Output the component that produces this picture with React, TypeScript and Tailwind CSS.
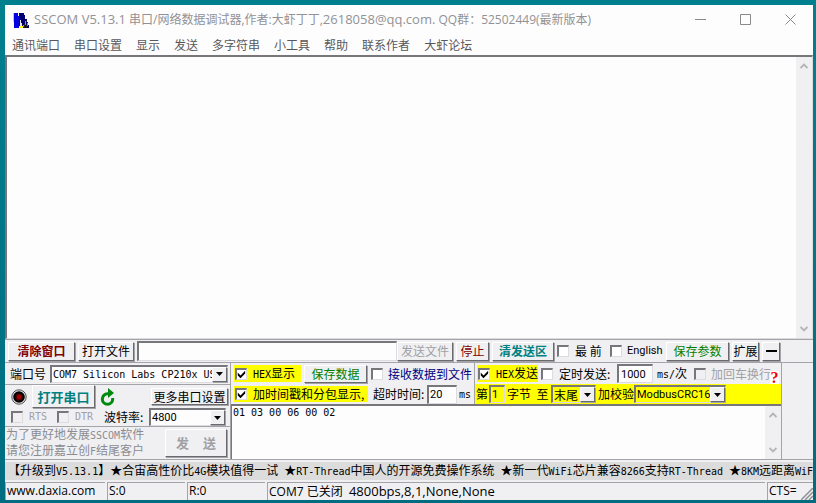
import { ReactNode } from 'react';

const MENUS = ['通讯端口', '串口设置', '显示', '发送', '多字符串', '小工具', '帮助', '联系作者', '大虾论坛'];

const RAISED = 'border border-t-white border-l-white border-r-[#6a6a6e] border-b-[#6a6a6e] shadow-[1px_1px_0_#a4a4a8]';
const SUNKEN = 'border-t-2 border-l-2 border-r border-b border-t-[#77777b] border-l-[#77777b] border-r-[#dcdce0] border-b-[#dcdce0]';

const Mono = ({ children }: { children: ReactNode }) => (
    <span className="font-['DejaVu_Sans_Mono',monospace] text-[10px]">{ children }</span>
);

const Button = ({ children, className = '' }: { children: ReactNode; className?: string }) => (
    <button type="button" className={`flex shrink-0 items-center justify-center whitespace-nowrap bg-[#f0f0f3] ${RAISED} ${className}`}>
        { children }
    </button>
);

const Check = ({ children, checked = false, disabled = false, className = '' }: { children: ReactNode; checked?: boolean; disabled?: boolean; className?: string }) => (
    <label className={`flex shrink-0 items-center whitespace-nowrap ${className}`}>
        <span className="relative flex h-3 w-3 shrink-0">
            <input
                type="checkbox"
                defaultChecked={ checked }
                disabled={ disabled }
                className={`peer h-3 w-3 appearance-none ${SUNKEN} ${disabled ? 'bg-[#f0f0f3]' : 'bg-white'}`}
            />
            <svg viewBox="0 0 13 13" className="pointer-events-none absolute inset-0 hidden h-3 w-3 peer-checked:block">
                <path d="M3 5v3l3 3 5-5V3L6 8z" fill="#000" />
            </svg>
        </span>
        { children }
    </label>
);

const Select = ({ label, value, className = '', text = '' }: { label: string; value: string; className?: string; text?: string }) => (
    <span className={`relative flex ${SUNKEN} ${className}`}>
        <select aria-label={ label } className={`h-full w-full min-w-0 appearance-none bg-transparent pl-px pr-[15px] ${text}`}>
            <option>{ value }</option>
        </select>
        <span className={`pointer-events-none absolute top-0 right-0 bottom-0 flex w-[15px] items-center justify-center bg-[#f0f0f3] ${RAISED}`}>
            <svg viewBox="0 0 7 4" className="h-1 w-[7px]"><path d="M0 0h7L3.5 4z" fill="#000" /></svg>
        </span>
    </span>
);

const ScrollBar = () => (
    <div className="flex w-4 shrink-0 flex-col items-center justify-between bg-[#f0f0f3] py-[6px]">
        <svg viewBox="0 0 8 6" className="h-[6px] w-2"><path d="M0.5 5L4 1.5 7.5 5" fill="none" stroke="#b4b4b8" strokeWidth="1.8" /></svg>
        <svg viewBox="0 0 8 6" className="h-[6px] w-2"><path d="M0.5 1L4 4.5 7.5 1" fill="none" stroke="#b4b4b8" strokeWidth="1.8" /></svg>
    </div>
);

const TitleBar = () => (
    <header className="flex h-[29px] shrink-0 items-center bg-[#fdfdfd] pl-2 text-[#929296]">
        <svg viewBox="0 0 16 16" className="mr-[5px] h-4 w-4" shapeRendering="crispEdges">
            <path d="M0 1h1v9H0z" fill="#c8c8c8" />
            <path d="M1 1h5v15H1z" fill="#0000e0" />
            <path d="M5 1h1v3H5z" fill="#fff" />
            <path d="M6 1h5v2h1v4h2v3h1v3h1v3H6z" fill="#000070" />
            <path d="M7 8h1v3h1v3H7z" fill="#e8e8e8" />
            <path d="M12 9h1v4h-1zM10 13h1v2h-1zM14 11h1v3h-1z" fill="#909090" />
            <path d="M13 8h1v2h-1zM11 12h1v4h-1zM13 13h1v3h-1z" fill="#202020" />
            <path d="M6 14h4v2H6z" fill="#ffff00" />
        </svg>
        <h1 className="truncate font-['Open_Sans','Noto_Sans_CJK_SC',sans-serif] text-xs">
            <span className="text-[13px]">SSCOM V5.13.1</span> 串口/网络数据调试器,作者:大虾丁丁,<span className="text-[13px]">2618058@qq.com.</span> QQ群：52502449(最新版本)
        </h1>
        <div className="ml-auto flex">
            <button type="button" aria-label="Minimize" className="flex w-[45px] items-center justify-center">
                <svg viewBox="0 0 11 11" className="h-[11px] w-[11px]"><path d="M0 5.5h11" stroke="#8a8a8a" /></svg>
            </button>
            <button type="button" aria-label="Maximize" className="flex w-[45px] items-center justify-center">
                <svg viewBox="0 0 11 11" className="h-[11px] w-[11px]"><path d="M.5.5h10v10H.5z" fill="none" stroke="#8a8a8a" /></svg>
            </button>
            <button type="button" aria-label="Close" className="flex w-[45px] items-center justify-center">
                <svg viewBox="0 0 11 11" className="h-[11px] w-[11px]"><path d="M.5.5l10 10M10.5.5l-10 10" stroke="#8a8a8a" /></svg>
            </button>
        </div>
    </header>
);

const SendBar = () => (
    <div className="flex h-6 shrink-0 items-center border-t border-b border-[#a4a4a8] pl-[3px]">
        <Button className="h-[19px] w-[67px] font-bold text-[#800000]">清除窗口</Button>
        <Button className="ml-[3px] h-[19px] w-14">打开文件</Button>
        <input type="text" aria-label="文件" className={`ml-[3px] h-5 min-w-0 flex-1 bg-[#fdfdfd] px-1 ${SUNKEN}`} />
        <Button className="h-[19px] w-14 text-[#a0a0a4]">发送文件</Button>
        <Button className="ml-[3px] h-[19px] w-[33px] text-[#800000]">停止</Button>
        <Button className="ml-[3px] h-[19px] w-[62px] font-bold text-[#008080]">清发送区</Button>
        <Check className="ml-[3px] w-[53px] gap-[6px]">最 前</Check>
        <Check className="w-[56px] gap-[5px]"><span className="font-['Roboto',sans-serif] text-[11px]">English</span></Check>
        <Button className="h-[19px] w-[63px] text-[#008000]">保存参数</Button>
        <Button className="ml-[3px] h-[19px] w-[27px]">扩展</Button>
        <Button className="ml-[3px] mr-[33px] h-[19px] w-[18px]">
            <svg viewBox="0 0 11 2" className="h-[2px] w-[11px]"><path d="M0 0h11v2H0z" fill="#000" /></svg>
        </Button>
    </div>
);

const PortPanel = () => (
    <section className="flex w-[225px] shrink-0 flex-col">
        <div className="flex h-[21px] items-center pl-[5px]">
            <span className="w-10 shrink-0">端口号</span>
            <Select label="端口号" value="COM7 Silicon Labs CP210x USB" className="h-[18px] w-[178px] bg-[#fdfdfd]" text="font-['DejaVu_Sans_Mono',monospace] text-[10px]" />
        </div>
        <div className="flex h-[43px] flex-col border-t border-b border-[#a4a4a8]">
            <div className="flex h-[23px] items-center pl-[6px]">
                <svg viewBox="0 0 16 16" className="h-4 w-4">
                    <circle cx="8" cy="8" r="7.2" fill="#e4e4e4" stroke="#505050" strokeWidth="1" />
                    <circle cx="8" cy="8" r="5.8" fill="#000" />
                    <circle cx="8" cy="8" r="3.6" fill="#500000" />
                    <circle cx="8" cy="8" r="2.2" fill="#a80000" />
                </svg>
                <Button className="ml-[5px] h-[23px] w-[63px] text-[13px] font-bold text-[#008080]">打开串口</Button>
                <button type="button" aria-label="刷新" className="ml-[5px]">
                    <svg viewBox="0 0 16 18" className="h-[18px] w-4">
                        <path d="M8.5 5.8H7.5A5.2 5.2 0 1 0 12.7 11V10" fill="none" stroke="#008a10" strokeWidth="3" />
                        <path d="M8 0l6 5-6 5z" fill="#008a10" />
                    </svg>
                </button>
                <Button className="ml-auto mr-[2px] h-[17px] w-[77px]">更多串口设置</Button>
            </div>
            <div className="flex h-[19px] items-center pl-[6px] text-[#a0a0a4]">
                <Check disabled className="w-[46px] gap-[6px]"><Mono>RTS</Mono></Check>
                <Check disabled className="w-[47px] gap-[6px]"><Mono>DTR</Mono></Check>
                <span className="w-[45px] shrink-0 text-black">波特率:</span>
                <Select label="波特率" value="4800" className="h-[18px] w-[77px] bg-[#fdfdfd] text-black" text="font-['Roboto',sans-serif] text-[11px]" />
            </div>
        </div>
        <div className="flex flex-1 items-center pl-px text-[#8c8c90]">
            <p className="w-[159px] leading-[14px]">
                为了更好地发展<Mono>SSCOM</Mono>软件<br />
                请您注册嘉立创<Mono>F</Mono>结尾客户
            </p>
            <Button className="h-7 w-[62px] gap-[14px] text-[13px] font-bold text-[#a0a0a4]"><span>发</span><span>送</span></Button>
        </div>
    </section>
);

const SendPanel = () => (
    <section className="flex min-w-0 flex-1 flex-col border-l border-[#a4a4a8]">
        <div className="flex h-[41px]">
            <div className="flex w-[243px] shrink-0 flex-col">
                <div className="flex h-[21px] items-center pl-[3px]">
                    <Check checked className="h-[17px] w-[67px] gap-[6px] bg-[#ffff00] pl-px"><span><Mono>HEX</Mono>显示</span></Check>
                    <Button className="ml-[3px] h-[18px] w-[63px] text-[#008000]">保存数据</Button>
                    <Check className="ml-1 gap-[5px] text-[#000080]">接收数据到文件</Check>
                </div>
                <div className="flex h-5 items-center pl-[3px]">
                    <Check checked className="h-4 w-[134px] gap-[6px] bg-[#ffff00] pl-px">加时间戳和分包显示,</Check>
                    <label htmlFor="timeout" className="ml-[5px] w-[54px] shrink-0 whitespace-nowrap">超时时间:</label>
                    <input id="timeout" defaultValue="20" className={`h-[19px] w-[30px] bg-[#fdfdfd] pl-px font-['Roboto',sans-serif] text-[11px] ${SUNKEN}`} />
                    <span className="ml-[2px]"><Mono>ms</Mono></span>
                </div>
            </div>
            <div className="flex min-w-0 flex-1 flex-col border-l border-[#a4a4a8]">
                <div className="flex h-[21px] items-center pl-[2px]">
                    <Check checked className="h-[17px] w-[61px] gap-[6px] bg-[#ffff00] pl-px"><span><Mono>HEX</Mono>发送</span></Check>
                    <Check className="ml-[3px] w-[76px] gap-[6px]">定时发送:</Check>
                    <input aria-label="定时" defaultValue="1000" className={`h-[19px] w-[36px] bg-[#fdfdfd] pl-[2px] font-['Roboto',sans-serif] text-[11px] ${SUNKEN}`} />
                    <span className="ml-1 w-[37px] shrink-0"><Mono>ms/</Mono>次</span>
                    <Check disabled className="gap-[5px] text-[#a0a0a4]">加回车换行</Check>
                    <button type="button" aria-label="帮助" className="-ml-px h-[13px] w-[9px] shrink-0 self-end bg-white font-['Liberation_Serif',serif] text-base leading-[13px] font-bold text-[#f00000]">?</button>
                </div>
                <div className="flex h-5 items-center bg-[#ffff00] pl-px whitespace-nowrap">
                    <span className="w-[13px] shrink-0">第</span>
                    <input aria-label="字节" defaultValue="1" className={`h-[18px] w-4 shrink-0 bg-[#ffff00] pl-px font-['Roboto',sans-serif] text-[11px] ${SUNKEN}`} />
                    <span className="ml-[2px] w-11 shrink-0">字节&nbsp; 至</span>
                    <Select label="至" value="末尾" className="h-[18px] w-[45px] shrink-0" />
                    <span className="ml-[2px] w-9 shrink-0">加校验</span>
                    <Select label="加校验" value="ModbusCRC16" className="h-[18px] w-[92px] shrink-0" text="font-['Roboto',sans-serif] text-[11px]" />
                </div>
            </div>
        </div>
        <div className="flex flex-1 border-t-2 border-l border-[#77777b] bg-[#fdfdfd]">
            <textarea aria-label="发送区" defaultValue="01 03 00 06 00 02" className="min-w-0 flex-1 resize-none overflow-hidden pl-px font-['DejaVu_Sans_Mono',monospace] text-[10px] leading-[14px] outline-none" />
            <ScrollBar />
        </div>
    </section>
);

export default function App() {
    return (
        <div className="flex min-h-screen flex-col bg-linear-to-b from-[#00808e] to-[#006c80] px-[5px] pt-[5px] pb-[3px] font-['Noto_Sans_CJK_SC',sans-serif] text-xs leading-4 text-black">
            <main className="mr-[-2px] flex flex-1 flex-col bg-[#f0f0f3]">
                <TitleBar />
                <nav className="flex h-[21px] shrink-0 items-center gap-[14px] bg-[#fdfdfd] pl-[7px] text-[#58585c]">
                    { MENUS.map(menu => <button type="button" key={ menu }>{ menu }</button>) }
                </nav>
                <div className={`flex min-h-20 flex-1 bg-[#fdfdfd] ${SUNKEN}`}>
                    <textarea aria-label="接收区" className="min-w-0 flex-1 resize-none outline-none" />
                    <ScrollBar />
                </div>
                <SendBar />
                <div className="flex h-[97px] shrink-0 border-b border-[#a4a4a8]">
                    <PortPanel />
                    <SendPanel />
                    <div className="w-8 shrink-0 border-l border-[#a4a4a8]" />
                </div>
                <div className="my-[2px] h-[18px] shrink-0 overflow-hidden bg-[#dcdcdc] pl-[3px] whitespace-nowrap">
                    【升级到<Mono>V5.13.1</Mono>】★合宙高性价比<Mono>4G</Mono>模块值得一试<Mono> </Mono>★<Mono>RT-Thread</Mono>中国人的开源免费操作系统<Mono> </Mono>★新一代<Mono>WiFi</Mono>芯片兼容<Mono>8266</Mono>支持<Mono>RT-Thread </Mono>★<Mono>8KM</Mono>远距离<Mono>WiF</Mono>
                </div>
                <footer className="flex h-[18px] shrink-0 gap-[2px] font-['Open_Sans','Noto_Sans_CJK_SC',sans-serif]">
                    <span className="w-[100px] border-t border-l border-[#a4a4a8] pl-px">www.daxia.com</span>
                    <span className="w-[78px] border-t border-l border-[#a4a4a8] pl-px">S:0</span>
                    <span className="w-[78px] border-t border-l border-[#a4a4a8] pl-px">R:0</span>
                    <span className="flex-1 border-t border-l border-[#a4a4a8] pl-px">COM7 已关闭&nbsp; <span className="text-[13px]">4800bps,8,1,None,None</span></span>
                    <span className="flex w-[46px] items-end justify-between border-t border-l border-[#a4a4a8] pl-px">
                        <span className="self-start">CTS=</span>
                        <svg viewBox="0 0 12 12" className="h-3 w-3"><path d="M0 12L12 0M4 12l8-8M8 12l4-4" stroke="#909094" strokeWidth="1.5" /></svg>
                    </span>
                </footer>
            </main>
        </div>
    );
}
